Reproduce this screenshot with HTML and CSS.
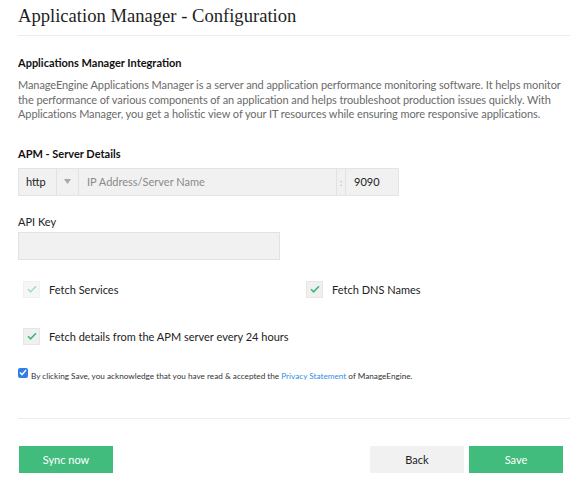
FILE: index.html
```html
<!DOCTYPE html>
<html>
<head>
<meta charset="utf-8">
<link rel="stylesheet" href="styles.css">
</head>
<body>
<div class="page">
  <h1 class="title">Application Manager - Configuration</h1>
  <div class="content">
    <h2 class="section-title">Applications Manager Integration</h2>
    <p class="desc">ManageEngine Applications Manager is a server and application performance monitoring software. It helps monitor the performance of various components of an application and helps troubleshoot production issues quickly. With Applications Manager, you get a holistic view of your IT resources while ensuring more responsive applications.</p>

    <h2 class="section-title server-title">APM - Server Details</h2>
    <div class="input-group">
      <div class="cell proto">http</div>
      <div class="cell arrow"><svg width="7" height="5" viewBox="0 0 7 5"><path d="M0 0h7L3.5 5z" fill="#a8a8a8"/></svg></div>
      <div class="cell host">IP Address/Server Name</div>
      <div class="cell colon">:</div>
      <div class="cell port">9090</div>
    </div>

    <label class="field-label">API Key</label>
    <div class="api-input"></div>

    <div class="checks">
      <div class="check-item">
        <span class="box faded"><svg width="10" height="8" viewBox="0 0 10 8"><path d="M1 4.2l2.6 2.6L9 1.2" fill="none" stroke="#9fdcb8" stroke-width="1.4"/></svg></span>
        <span class="check-text">Fetch Services</span>
      </div>
      <div class="check-item">
        <span class="box"><svg width="10" height="8" viewBox="0 0 10 8"><path d="M1 4.2l2.6 2.6L9 1.2" fill="none" stroke="#3db874" stroke-width="1.6"/></svg></span>
        <span class="check-text">Fetch DNS Names</span>
      </div>
      <div class="check-item wide">
        <span class="box"><svg width="10" height="8" viewBox="0 0 10 8"><path d="M1 4.2l2.6 2.6L9 1.2" fill="none" stroke="#3db874" stroke-width="1.6"/></svg></span>
        <span class="check-text">Fetch details from the APM server every 24 hours</span>
      </div>
    </div>

    <div class="consent">
      <span class="blue-box"><svg width="8" height="7" viewBox="0 0 8 7"><path d="M1 3.6l2 2L7 1" fill="none" stroke="#fff" stroke-width="1.4"/></svg></span>
      <span class="consent-text">By clicking Save, you acknowledge that you have read &amp; accepted the <a class="link">Privacy Statement</a> of ManageEngine.</span>
    </div>
  </div>
  <div class="footer">
    <button class="btn green">Sync now</button>
    <div class="right-btns">
      <button class="btn grey">Back</button>
      <button class="btn green">Save</button>
    </div>
  </div>
</div>
</body>
</html>
```
FILE: styles.css
```css
* { box-sizing: border-box; }
html, body { margin: 0; padding: 0; background: #fff; }
body { font-family: Lato, "Open Sans", sans-serif; color: #222; width: 570px; height: 491px; overflow: hidden; }
.page { padding: 0 0 0 18px; }
.title {
  font-family: "Liberation Serif", serif;
  font-weight: normal;
  font-size: 18.6px;
  margin: 0;
  padding: 5px 0 8px 0;
  line-height: 22px;
  color: #1e1e1e;
  border-bottom: 1px solid #ececec;
}
.content { padding-top: 19px; }
.section-title { font-size: 11px; font-weight: bold; margin: 0; line-height: 15px; color: #111; }
.desc { font-size: 11px; color: #6a6a6a; line-height: 14.6px; margin: 8px 0 0 0; padding-right: 2px; letter-spacing: -0.08px; }
.server-title { margin-top: 24px; }
.input-group {
  display: flex; margin-top: 7px; width: 381px; height: 28px;
  background: #f1f1f1; border: 1px solid #e4e4e4;
  font-size: 11px; color: #222;
}
.cell { display: flex; align-items: center; border-right: 1px solid #e2e2e2; }
.cell:last-child { border-right: none; }
.proto { width: 38px; padding-left: 7px; }
.arrow { width: 22px; justify-content: center; }
.host { flex: 1; padding-left: 8px; color: #8a8a8a; }
.colon { width: 9px; justify-content: center; color: #b0b0b0; font-size: 10px; }
.port { width: 52px; padding-left: 8px; }
.field-label { display: block; font-size: 11px; margin-top: 18px; line-height: 15px; color: #222; }
.api-input { width: 262px; height: 28px; margin-top: 3px; background: #f1f1f1; border: 1px solid #e2e2e2; }
.checks { display: grid; grid-template-columns: 283px 1fr; row-gap: 30px; margin-top: 21px; padding-left: 5px; }
.check-item { display: flex; align-items: center; gap: 9px; font-size: 11px; color: #222; }
.check-item.wide { grid-column: 1 / 3; }
.box { width: 17px; height: 17px; background: #f0f0f0; border: 1px solid #e6e6e6; display: flex; align-items: center; justify-content: center; }
.box.faded { background: #f6f6f6; border-color: #f0f0f0; }
.consent { display: flex; align-items: flex-start; margin-top: 23px; font-size: 8.2px; color: #333; }
.blue-box { width: 10px; height: 10px; background: #2f7fe6; border-radius: 2px; display: flex; align-items: center; justify-content: center; margin-top: 0; margin-right: 3px; }
.consent-text { padding-top: 3px; }
.link { color: #2d8fe6; }
.footer { border-top: 1px solid #ececec; margin-top: 37px; padding-top: 27px; display: flex; justify-content: space-between; padding-right: 7px; }
.right-btns { display: flex; gap: 5px; }
.btn { width: 94px; height: 27px; border: none; font-family: Lato, sans-serif; font-size: 11px; padding: 0; }
.btn.green { background: #42bc7d; color: #fff; }
.btn.grey { background: #f1f1f1; color: #222; }
.footer > .btn { margin-left: 1px; }
```
